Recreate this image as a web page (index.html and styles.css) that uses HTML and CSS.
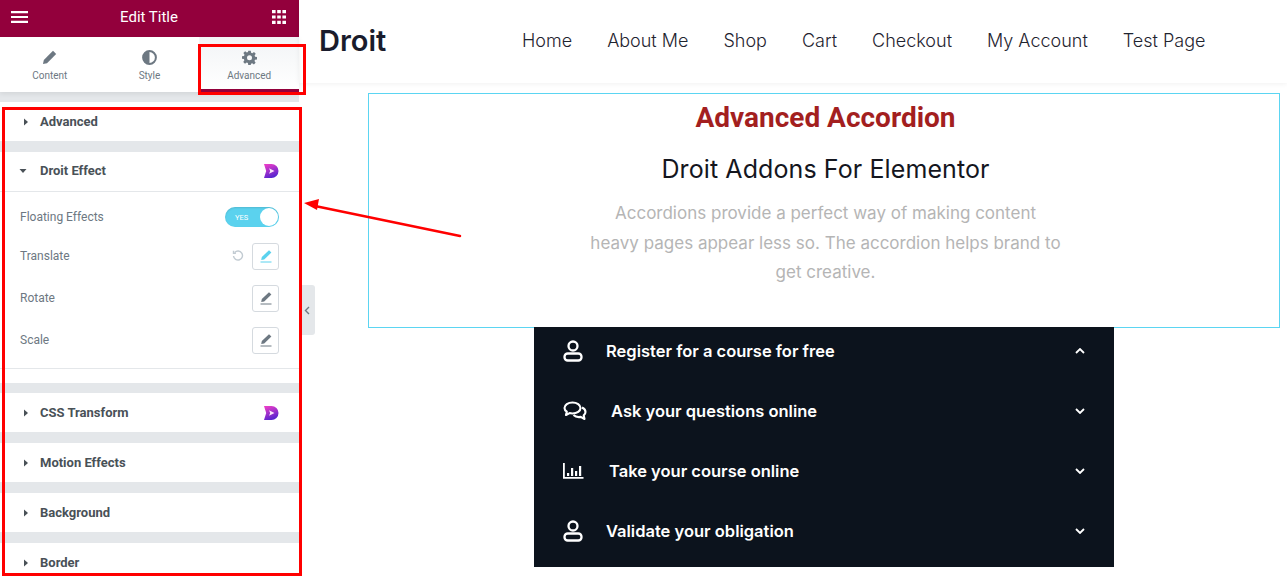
FILE: index.html

```html
<!DOCTYPE html>
<html lang="en">
<head>
  <meta charset="UTF-8" />
  <meta name="viewport" content="width=device-width, initial-scale=1.0"/>
  <title>Edit Title</title>
  <link rel="stylesheet" href="styles.css">
</head>
<body>
  <svg class="defs" width="0" height="0">
    <defs>
      <symbol id="caret" viewBox="0 0 8 8"><path d="M2 0.5 6 4 2 7.5Z"/></symbol>
      <symbol id="caret-down" viewBox="0 0 8 8"><path d="M0.5 2h7L4 6Z"/></symbol>
      <symbol id="droit" viewBox="0 0 16 16">
        <path fill="url(#droitfill)" d="M1 1h7.500a7 7 0 0 1 0 14H1l2.200-7Z"/>
        <path fill="#fbe6fb" d="M6 5.200 11.500 8 6 10.800 7.200 8Z"/>
      </symbol>
      <symbol id="edit" viewBox="0 0 14 14">
        <path d="M10 1.200 12.400 3.600 5.200 10.400 2.200 11 2.800 8Z"/>
        <path d="M1.500 13h11" stroke="currentColor" stroke-width="1" fill="none"/>
      </symbol>
      <symbol id="user" viewBox="0 0 20 22">
        <circle cx="10" cy="6" r="4.500" fill="none" stroke="currentColor" stroke-width="2.300"/>
        <rect x="1.500" y="13.500" width="17" height="7" rx="3.200" fill="none" stroke="currentColor" stroke-width="2.300"/>
      </symbol>
      <symbol id="chev" viewBox="0 0 10 6"><path d="M1 1 5 5 9 1" fill="none" stroke="currentColor" stroke-width="1.800"/></symbol>
      <linearGradient id="droitfill" x1="0.300" y1="0" x2="0.700" y2="1">
        <stop offset="0" stop-color="#e63cc8"/>
        <stop offset="1" stop-color="#4a22d0"/>
      </linearGradient>
    </defs>
  </svg>

  <div class="page">
    <aside class="panel">
      <div class="topbar">
        <svg class="menu-icon" width="18" height="12" viewBox="0 0 18 12" fill="#fff"><path d="M0 0h17v2.200H0zM0 4.900h17v2.200H0zM0 9.800h17V12H0z"/></svg>
        <span class="topbar-title">Edit Title</span>
        <svg class="grid-icon" width="14" height="14" viewBox="0 0 14 14" fill="#fff"><path d="M0 0h3.600v3.200H0zM5.200 0h3.600v3.200H5.200zM10.400 0H14v3.200h-3.600zM0 5.400h3.600v3.200H0zM5.200 5.400h3.600v3.200H5.200zM10.400 5.400H14v3.200h-3.600zM0 10.800h3.600V14H0zM5.200 10.800h3.600V14H5.200zM10.400 10.800H14V14h-3.600z"/></svg>
      </div>

      <div class="tabs">
        <div class="tab">
          <svg width="15" height="15" viewBox="0 0 15 15" fill="#6d7882"><path d="M11 .8 14.200 4 5 13.200 1 14l.8-4Z"/></svg>
          <span>Content</span>
        </div>
        <div class="tab">
          <svg width="15" height="15" viewBox="0 0 15 15"><circle cx="7.500" cy="7.500" r="6.400" fill="none" stroke="#6d7882" stroke-width="2"/><path d="M7.500 1a6.500 6.500 0 0 0 0 13Z" fill="#6d7882"/></svg>
          <span>Style</span>
        </div>
        <div class="tab tab-active">
          <svg width="15" height="15" viewBox="0 0 24 24" fill="#6d7882"><path fill-rule="evenodd" d="M10 1h4l.6 3.200 1.900.8 2.700-1.800 2.800 2.800-1.800 2.700.8 1.900L24 11v4l-3.200.6-.8 1.900 1.800 2.700-2.800 2.800-2.700-1.800-1.900.8L14 24h-4l-.6-3.200-1.900-.8-2.700 1.800L2 19l1.800-2.700-.8-1.900L0 13.800V10l3.200-.6.8-1.900L2.200 4.800 5 2l2.700 1.800 1.900-.8ZM12 8.500a4 4 0 1 0 0 8 4 4 0 0 0 0-8Z"/></svg>
          <span>Advanced</span>
        </div>
      </div>

      <div class="sections">
        <section class="sec">
          <svg class="caret"><use href="#caret"/></svg>
          <span class="sec-name">Advanced</span>
        </section>

        <section class="sec-open">
          <div class="sec sec-head">
            <svg class="caret caret-open"><use href="#caret-down"/></svg>
            <span class="sec-name">Droit Effect</span>
            <svg class="droit"><use href="#droit"/></svg>
          </div>
          <div class="controls">
            <div class="control control-toggle">
              <span class="control-label">Floating Effects</span>
              <div class="toggle"><span class="toggle-yes">YES</span><span class="toggle-knob"></span></div>
            </div>
            <div class="control">
              <span class="control-label">Translate</span>
              <svg class="undo" width="12" height="12" viewBox="0 0 12 12" fill="none" stroke="#c2cbd2" stroke-width="1.400"><path d="M2.700 2.400A4.500 4.500 0 1 1 1.500 6"/><path d="M1.500 0.800v2.400h2.400" /></svg>
              <button class="edit-btn edit-on"><svg width="14" height="14"><use href="#edit"/></svg></button>
            </div>
            <div class="control">
              <span class="control-label">Rotate</span>
              <button class="edit-btn"><svg width="14" height="14"><use href="#edit"/></svg></button>
            </div>
            <div class="control">
              <span class="control-label">Scale</span>
              <button class="edit-btn"><svg width="14" height="14"><use href="#edit"/></svg></button>
            </div>
          </div>
        </section>

        <section class="sec">
          <svg class="caret"><use href="#caret"/></svg>
          <span class="sec-name">CSS Transform</span>
          <svg class="droit"><use href="#droit"/></svg>
        </section>
        <section class="sec">
          <svg class="caret"><use href="#caret"/></svg>
          <span class="sec-name">Motion Effects</span>
        </section>
        <section class="sec">
          <svg class="caret"><use href="#caret"/></svg>
          <span class="sec-name">Background</span>
        </section>
        <section class="sec">
          <svg class="caret"><use href="#caret"/></svg>
          <span class="sec-name">Border</span>
        </section>
      </div>
    </aside>

    <div class="collapse-tab">
      <svg width="6" height="9" viewBox="0 0 6 9" fill="none" stroke="#6d7882" stroke-width="1.400"><path d="M5 1 1.500 4.500 5 8"/></svg>
    </div>

    <main class="site">
      <header class="site-header">
        <div class="logo">Droit</div>
        <nav class="nav">
          <a>Home</a>
          <a>About Me</a>
          <a>Shop</a>
          <a>Cart</a>
          <a>Checkout</a>
          <a>My Account</a>
          <a>Test Page</a>
        </nav>
      </header>

      <div class="preview">
        <h2 class="preview-title">Advanced Accordion</h2>
        <h3 class="preview-sub">Droit Addons For Elementor</h3>
        <p class="preview-text">Accordions provide a perfect way of making content<br>heavy pages appear less so. The accordion helps brand to<br>get creative.</p>
      </div>

      <div class="accordion">
        <div class="acc-row">
          <svg class="acc-icon" width="20" height="22"><use href="#user"/></svg>
          <span class="acc-text">Register for a course for free</span>
          <svg class="acc-chev acc-chev-up" width="10" height="6"><use href="#chev"/></svg>
        </div>
        <div class="acc-row">
          <svg class="acc-icon acc-icon-wide" width="24" height="20" viewBox="0 0 24 20" fill="none" stroke="currentColor" stroke-width="2.100" stroke-linejoin="round">
            <path d="M9.500 1.500c4.500 0 8 2.500 8 5.500s-3.500 5.500-8 5.500c-1 0-2-.1-2.900-.4L3 14l.8-3.300C2.300 9.700 1.500 8.400 1.500 7c0-3 3.500-5.500 8-5.500Z"/>
            <path d="M19 6.500c2.100 1 3.500 2.600 3.500 4.500 0 1.300-.7 2.500-1.800 3.400l.8 3.600-3.800-2.100c-2.800.5-5.500-.3-7.200-1.900"/>
          </svg>
          <span class="acc-text">Ask your questions online</span>
          <svg class="acc-chev" width="10" height="6"><use href="#chev"/></svg>
        </div>
        <div class="acc-row">
          <svg class="acc-icon acc-icon-chart" width="21" height="16" viewBox="0 0 21 16" fill="currentColor"><path d="M0 0h1.800v14H20.500v1.800H0zM4 10h2.200v3H4zM8 5h2.200v8H8zM12 8h2.200v5H12zM16 3h2.200v10H16z"/></svg>
          <span class="acc-text">Take your course online</span>
          <svg class="acc-chev" width="10" height="6"><use href="#chev"/></svg>
        </div>
        <div class="acc-row">
          <svg class="acc-icon" width="20" height="22"><use href="#user"/></svg>
          <span class="acc-text">Validate your obligation</span>
          <svg class="acc-chev" width="10" height="6"><use href="#chev"/></svg>
        </div>
      </div>
    </main>
  </div>

  <!-- red annotations drawn on top of the screenshot -->
  <div class="mark mark-tab"></div>
  <div class="mark mark-panel"></div>
  <svg class="mark-arrow" width="170" height="50" viewBox="0 0 170 50">
    <path d="M159 38 14 8" stroke="#ff0000" stroke-width="2.500" stroke-linecap="round"/>
    <path d="M3 5 18 1 16 12Z" fill="#ff0000"/>
  </svg>
</body>
</html>
```

FILE: styles.css

```css
* {
  box-sizing: border-box;
}
html, body {
  margin: 0;
  height: 579px;
  overflow: hidden;
  background-color: #fff;
}
body {
  position: relative;
  font-family: "Roboto", "Liberation Sans", sans-serif;
}
.defs {
  position: absolute;
}
.page {
  display: flex;
  height: 579px;
}

/* left panel */
.panel {
  width: 299px;
  flex: none;
  display: flex;
  flex-direction: column;
  background-color: #e4e7ea;
}
.topbar {
  height: 37px;
  flex: none;
  display: flex;
  align-items: center;
  justify-content: space-between;
  padding: 0 13px 3px 11px;
  background-color: #93003c;
  color: #fff;
}
.topbar-title {
  font-size: 15px;
  margin-right: 3px;
}
.tabs {
  height: 55px;
  flex: none;
  display: flex;
  background-color: #fff;
  box-shadow: 0 2px 5px rgba(0,0,0,0.08);
}
.tab {
  flex: 1;
  display: flex;
  flex-direction: column;
  align-items: center;
  gap: 5px;
  padding-top: 13px;
  font-size: 10px;
  color: #6d7882;
}
.tab-active {
  background: linear-gradient(#f2f4f6, #fff);
  border-bottom: 3px solid #93003c;
}
.sections {
  margin-top: 10px;
  display: flex;
  flex-direction: column;
  gap: 11px;
}
.sec {
  height: 39px;
  flex: none;
  display: flex;
  align-items: center;
  padding: 0 20px 0 22px;
  background-color: #fff;
  font-size: 13px;
  color: #495157;
}
.caret {
  width: 8px;
  height: 8px;
  fill: #495157;
  margin-right: 10px;
}
.caret-open {
  margin-left: -3px;
  margin-right: 13px;
}
.sec-name {
  font-weight: 700;
  flex: 1;
}
.droit {
  width: 16px;
  height: 16px;
}
.sec-open {
  background-color: #fff;
  padding-bottom: 14px;
  margin-bottom: -1px;
}
.sec-head {
  border-bottom: 1px solid #e4e7ea;
  height: 40px;
  padding-bottom: 2px;
}
.controls {
  padding: 5px 20px 0;
  border-bottom: 1px solid #e4e7ea;
  height: 177px;
}
.control {
  height: 42px;
  display: flex;
  align-items: center;
  gap: 8px;
  font-size: 12px;
  color: #6d7882;
}
.control-toggle {
  height: 38px;
  padding-top: 2px;
}
.control-label {
  flex: 1;
}
.toggle {
  width: 54px;
  height: 20px;
  border-radius: 10px;
  background-color: #5bd2ee;
  display: flex;
  align-items: center;
  justify-content: space-between;
  padding: 0 1px 0 10px;
  box-shadow: inset 0 1px 2px rgba(0,0,0,0.12);
}
.toggle-yes {
  font-size: 7.500px;
  color: #fff;
}
.toggle-knob {
  width: 18px;
  height: 18px;
  border-radius: 50%;
  background-color: #fff;
}
.edit-btn {
  width: 27px;
  height: 27px;
  padding: 0;
  display: flex;
  align-items: center;
  justify-content: center;
  background-color: #fff;
  border: 1px solid #d5dadf;
  border-radius: 3px;
  color: #6d7882;
  fill: #6d7882;
}
.edit-on {
  color: #5bd2ee;
  fill: #5bd2ee;
}
.collapse-tab {
  position: absolute;
  left: 302px;
  top: 285px;
  width: 13px;
  height: 50px;
  display: flex;
  align-items: center;
  padding-left: 2px;
  background-color: #e4e7ea;
  border-radius: 0 3px 3px 0;
}

/* site preview */
.site {
  flex: 1;
  min-width: 0;
}
.site-header {
  height: 83px;
  display: flex;
  align-items: center;
  padding: 0 0 3px 20px;
  box-shadow: 0 1px 5px rgba(0,0,0,0.06);
}
.logo {
  width: 203px;
  font-family: "Inter", "Open Sans", sans-serif;
  font-size: 29px;
  font-weight: 600;
  color: #1a1c2c;
}
.nav {
  display: flex;
  gap: 35px;
  font-family: "Inter", "Open Sans", sans-serif;
  font-size: 18px;
  font-weight: 300;
  color: #1f2430;
}
.preview {
  width: 912px;
  height: 235px;
  margin: 10px 0 0 69px;
  padding: 8px 0 0 3px;
  border: 1px solid #5bd5f2;
  text-align: center;
}
.preview-title {
  margin: 0;
  font-size: 28px;
  line-height: 32px;
  font-weight: 700;
  color: #a31f1f;
}
.preview-sub {
  margin: 19px 0 0;
  font-family: "Inter", "Open Sans", sans-serif;
  font-size: 25px;
  line-height: 32px;
  letter-spacing: 0.1px;
  font-weight: 400;
  color: #14161e;
}
.preview-text {
  margin: 14px 0 0;
  font-family: "Inter", "Open Sans", sans-serif;
  font-size: 17px;
  line-height: 29.500px;
  color: #b5b5b5;
}
.accordion {
  width: 580px;
  margin: -1px 0 0 235px;
  background-color: #0c131d;
  color: #fff;
}
.acc-row {
  height: 60px;
  display: flex;
  align-items: center;
  padding: 0 29px 12px 29px;
  font-family: "Inter", "Open Sans", sans-serif;
  font-size: 16.500px;
  font-weight: 600;
}
.acc-icon {
  flex: none;
  margin-right: 23px;
}
.acc-icon-wide {
  margin-right: 24px;
}
.acc-icon-chart {
  margin-right: 25px;
}
.acc-text {
  flex: 1;
}
.acc-chev-up {
  transform: rotate(180deg);
}

/* red marks */
.mark {
  position: absolute;
  border: 3px solid #ff0000;
}
.mark-tab {
  left: 198px;
  top: 44px;
  width: 108px;
  height: 51px;
}
.mark-panel {
  left: 2px;
  top: 107px;
  width: 300px;
  height: 469px;
}
.mark-arrow {
  position: absolute;
  left: 301px;
  top: 198px;
}
```
